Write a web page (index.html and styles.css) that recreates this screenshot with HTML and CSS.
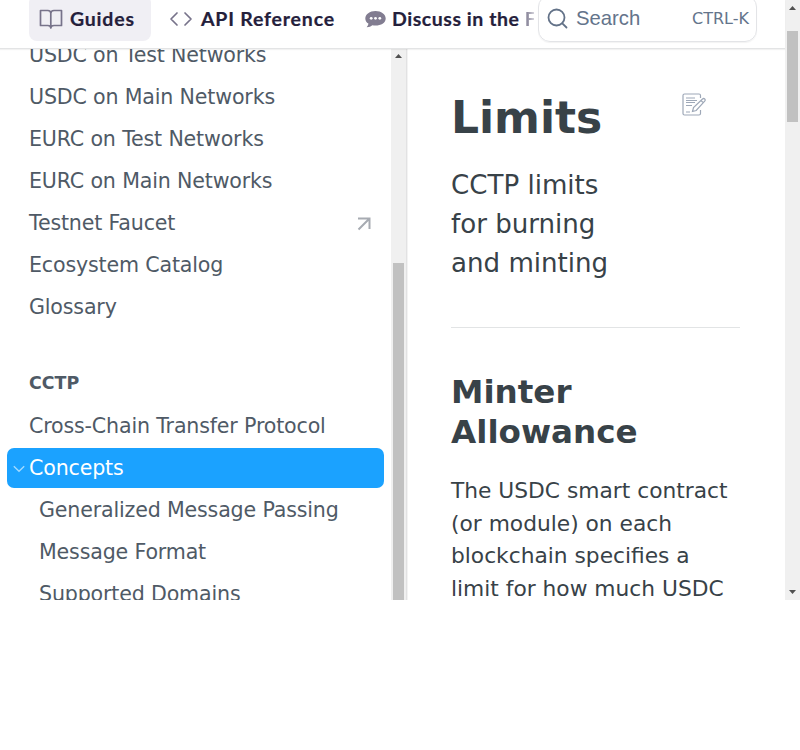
FILE: index.html
```html
<!DOCTYPE html>
<html lang="en">
<head>
<meta charset="utf-8">
<title>Limits</title>
<link rel="stylesheet" href="styles.css">
</head>
<body>
<div class="window">
  <div class="app">
    <header class="topbar">
      <nav class="tabs">
        <a class="tab active"><svg width="24" height="24" viewBox="0 0 24 24" class="line"><path d="M1.500 3.500h7.300c1.800 0 3 1 3 2.700v14.800c0-1.700-1.200-2.500-3-2.500H1.500zM22.500 3.500h-7.500c-2 0-3.200 1-3.200 2.700v14.800c0-1.700 1.300-2.500 3.200-2.500h7.500z"/></svg><span class="label">Guides</span></a>
        <a class="tab api"><svg width="24" height="24" viewBox="0 0 24 24" class="line"><path d="M8 6l-6 6 6 6M16 6l6 6-6 6"/></svg><span class="label">API Reference</span></a>
        <a class="tab discuss"><svg width="21" height="19" viewBox="0 0 21 19"><path fill="#827d91" d="M10.500 1C4.800 1 .3 4.300.3 8.400c0 2.100 1.200 3.900 3.100 5.200-.1 1.500-.8 2.700-1.700 3.600 2.500 0 4.400-.9 5.600-2 6.800 1.300 13.400-1.700 13.400-6.800C20.700 4.300 16.200 1 10.500 1z"/><g fill="#fff"><circle cx="6.200" cy="8.300" r="1.400"/><circle cx="10.500" cy="8.300" r="1.400"/><circle cx="14.800" cy="8.300" r="1.400"/></g></svg><span class="label forum">Discuss in the <i>F</i></span></a>
      </nav>
      <div class="search"><svg width="22" height="22" viewBox="0 0 22 22"><circle cx="9.500" cy="9.500" r="8"/><path d="M15.300 15.300l4.200 4.200"/></svg><span>Search</span><kbd>CTRL-K</kbd></div>
    </header>
    <div class="columns">
      <aside class="sidebar">
        <ul>
          <li>USDC on Test Networks</li>
          <li>USDC on Main Networks</li>
          <li>EURC on Test Networks</li>
          <li>EURC on Main Networks</li>
          <li>Testnet Faucet<svg class="external" width="14" height="14" viewBox="0 0 14 14"><path d="M1 1.500h11.500V12M12 2L1.500 12.500"/></svg></li>
          <li>Ecosystem Catalog</li>
          <li>Glossary</li>
        </ul>
        <h2>CCTP</h2>
        <ul>
          <li>Cross-Chain Transfer Protocol</li>
          <li class="selected"><svg width="12" height="8" viewBox="0 0 12 8"><path d="M.8 1.300L6 6.300l5.200-5"/></svg>Concepts</li>
          <li class="child">Generalized Message Passing</li>
          <li class="child">Message Format</li>
          <li class="child">Supported Domains</li>
        </ul>
      </aside>
      <div class="scrollbar inner"><svg class="arrow" width="7" height="4" viewBox="0 0 7 4"><path d="M0 4L3.500 0 7 4z"/></svg><div class="thumb"></div></div>
      <main>
        <div class="title"><h1>Limits</h1><svg width="24" height="24" viewBox="0 0 24 24"><path d="M18.500 5V2.500Q18.500 1 17 1H2.500Q1 1 1 2.500v18Q1 22 2.500 22H17q1.500 0 1.500-1.500V17M4 5h9M4 7.500h11M4 9.500h9M4 12.500h6M4 19h4M10.500 18.500l1-4 9-8.500q1.200-1 2.200 0t0 2.200l-8.500 9.300zM19 7.500l2.200 2.200"/></svg></div>
        <p class="lead">CCTP limits<br>for burning<br>and minting</p>
        <hr>
        <h2>Minter<br>Allowance</h2>
        <p class="copy">The USDC smart contract<br>(or module) on each<br>blockchain specifies a<br>limit for how much USDC</p>
      </main>
    </div>
  </div>
  <div class="scrollbar outer"><svg class="arrow" width="7" height="4" viewBox="0 0 7 4"><path d="M0 4L3.500 0 7 4z"/></svg><div class="thumb"></div><svg class="arrow end" width="7" height="4" viewBox="0 0 7 4"><path d="M0 0h7L3.500 4z"/></svg></div>
</div>
</body>
</html>
```
FILE: styles.css
```css
* { box-sizing: border-box; }
body { margin: 0; background: #fff; font-family: "DejaVu Sans", sans-serif; color: #384248; }
ul, h1, h2, p { margin: 0; padding: 0; list-style: none; }
svg { display: block; flex: none; fill: none; }
.window { display: flex; width: 800px; height: 600px; overflow: hidden; }
.app { width: 785px; display: flex; flex-direction: column; }
.topbar { height: 49px; flex: none; border-bottom: 1px solid #e3e4e5; box-shadow: 0 1px 1px #0000000d; display: flex; position: relative; background: #fff; }
.tabs { width: 538px; padding-left: 29px; display: flex; flex: none; font: 700 19.500px/38px Lato, sans-serif; color: #24203b; white-space: nowrap; }
.tab { display: flex; align-items: center; height: 46px; margin-top: -5px; padding-top: 2px; flex: none; }
.active { width: 122px; padding-left: 10px; gap: 7px; background: #f0eff4; border-radius: 8px; }
.line { stroke: #77738a; stroke-width: 1.700; stroke-linejoin: round; stroke-linecap: round; }
.api { margin-left: 18px; width: 196px; gap: 8px; }
.discuss { gap: 6px; }
.label { letter-spacing: .8px; -webkit-text-stroke: .2px #24203b; }
.forum { letter-spacing: .55px; }
.label i { font-style: normal; display: inline-block; width: 9px; color: transparent; -webkit-text-stroke: 0; background: linear-gradient(90deg, #77738a, #d5d4dc); background-clip: text; }
.search { width: 219px; height: 47px; margin-top: -5px; border: 1px solid #e3e4e7; border-radius: 12px; display: flex; align-items: center; padding: 0 7px 0 8px; color: #64748b; font: 20.300px/24px "Liberation Sans", sans-serif; box-shadow: 0 1px 1px #0000000d; }
.search svg { stroke: #637288; stroke-width: 1.800; stroke-linecap: round; }
.search span { margin-left: 7px; margin-top: -2px; }
.search kbd { margin-left: auto; font: 16px/24px "DejaVu Sans", sans-serif; }
.columns { display: flex; height: 551px; overflow: hidden; }
.sidebar { width: 391px; flex: none; margin-top: -14px; padding: 0 7px; font-size: 20.600px; letter-spacing: -.17px; line-height: 40px; color: #4f5a66; }
.sidebar li { height: 40px; margin-bottom: 2px; padding-left: 22px; display: flex; align-items: center; white-space: nowrap; }
.sidebar h2 { font-size: 17.400px; letter-spacing: 0; line-height: 24px; padding-left: 22px; margin: 44px 0 11px; }
.external { margin-left: auto; margin-right: 13px; margin-top: 1px; stroke: #a7abb2; stroke-width: 2; }
.sidebar .selected { background: #1ba2ff; color: #fff; border-radius: 7px; padding-left: 6px; gap: 4px; }
.selected svg { stroke: #a3daff; stroke-width: 1.400; margin-top: 1px; }
.sidebar .child { padding-left: 32px; }
.scrollbar { background: #f0f0f0; display: flex; flex-direction: column; align-items: center; flex: none; }
.arrow { fill: #505050; flex: none; }
.thumb { background: #c1c1c1; width: 11px; flex: none; }
.inner { width: 15px; padding-top: 5px; }
.inner .thumb { height: 338px; margin-top: 205px; }
.outer { width: 15px; padding-top: 6px; }
.outer .thumb { height: 91px; margin-top: 21px; }
.outer .end { margin-top: 468px; }
main { flex: 1; border-left: 1px solid #e2e2e3; box-shadow: inset 1px 0 #f3f3f3; padding: 39px 45px 0 44px; white-space: nowrap; }
.title { display: flex; height: 58px; }
h1 { font-size: 44px; line-height: 60px; width: 231px; }
.title svg { margin-top: 5px; stroke: #9ea8b8; stroke-width: 1.200; }
.lead { font-size: 26.100px; line-height: 39px; margin-top: 20px; }
hr { border: 0; height: 1px; background: #e2e4e5; margin: 44px 0; }
main h2 { font-size: 32.600px; line-height: 40px; }
.copy { font-size: 21.750px; line-height: 32.625px; margin-top: 23px; }
```
